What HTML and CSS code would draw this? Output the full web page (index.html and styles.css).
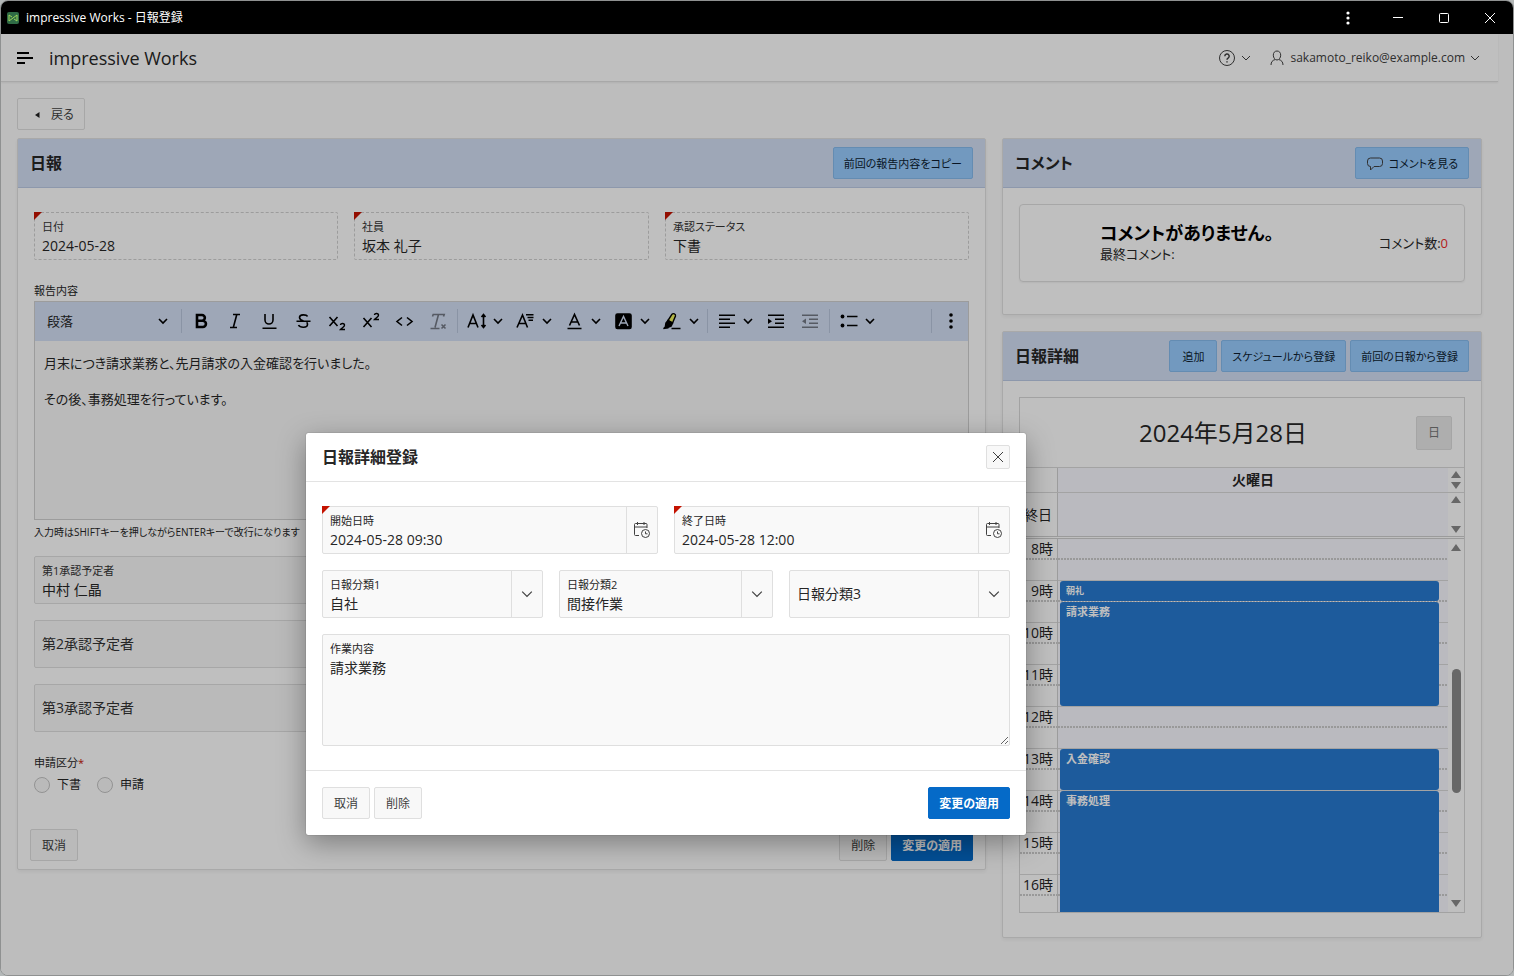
FILE: index.html
```html
<!DOCTYPE html>
<html lang="ja">
  <head>
    <meta charset="UTF-8" />
    <meta name="viewport" content="width=device-width, initial-scale=1.0" />
    <title>impressive Works - 日報登録</title>
    <link rel="stylesheet" href="styles.css">
  </head>
  <body>
    <svg class="defs" width="0" height="0" aria-hidden="true">
      <symbol id="chev" viewBox="0 0 10 10"><path d="M1 3l4 4 4-4" /></symbol>
      <symbol id="cal" viewBox="0 0 18 18"><path d="M6 14.500H2.500a1 1 0 0 1-1-1V3.500a1 1 0 0 1 1-1h10.500a1 1 0 0 1 1 1V7M1.500 6h12.500M4.500 1v3M11 1v3" /><circle cx="12.500" cy="12.500" r="4" /><path d="M12.500 10.500v2.300h2" /></symbol>
    </svg>

    <div class="window">
      <div class="titlebar">
        <svg class="app-icon" viewBox="0 0 12 12"><rect width="12" height="12" rx="2" fill="#2f6b45" /><path d="M2 3v6L10 3v6L7 7M2 3l3 2" fill="none" stroke="#9fd65a" /></svg>
        <span class="titlebar-text">impressive Works - 日報登録</span>
        <button class="win-btn win-menu" aria-label="メニュー"><svg viewBox="0 0 12 14" fill="#fff"><circle cx="6" cy="2" r="1.600" /><circle cx="6" cy="7" r="1.600" /><circle cx="6" cy="12" r="1.600" /></svg></button>
        <button class="win-btn" aria-label="最小化"><svg viewBox="0 0 12 14" stroke="#fff"><path d="M1 6.500h10" /></svg></button>
        <button class="win-btn" aria-label="最大化"><svg viewBox="0 0 12 14" fill="none" stroke="#fff"><rect x="1.500" y="2.500" width="9" height="9" rx="1" /></svg></button>
        <button class="win-btn" aria-label="閉じる"><svg viewBox="0 0 12 14" stroke="#fff"><path d="M1 2l10 10M11 2L1 12" /></svg></button>
      </div>

      <div class="page">
        <header class="app-header">
          <button class="icon-btn" aria-label="ナビゲーション"><svg width="16" height="14" viewBox="0 0 16 14" stroke="#000" stroke-width="2"><path d="M0 2h12M0 7h16M0 12h8" /></svg></button>
          <a class="app-name" href="#">impressive Works</a>
          <button class="nav-btn" aria-label="ヘルプ">
            <svg class="line" width="18" height="18" viewBox="0 0 18 18"><circle cx="9" cy="9" r="7.500" /><path d="M6.800 7.200a2.200 2.200 0 1 1 3.300 1.900c-.8.500-1.100.8-1.100 1.700" stroke-width="1.500" /><path d="M9 12.200v1.400" stroke-width="1.500" /></svg>
            <svg class="line" width="10" height="10"><use href="#chev" /></svg>
          </button>
          <button class="nav-btn">
            <svg class="line" width="16" height="18" viewBox="0 0 16 18"><path d="M8 2c2.300 0 3.700 1.700 3.700 4.200S10 11 8 11 4.300 8.700 4.300 6.200 5.700 2 8 2zM2 16c0-3 1.500-4.700 4-5.400M14 16c0-3-1.500-4.700-4-5.400" /></svg>
            <span>sakamoto_reiko@example.com</span>
            <svg class="line" width="10" height="10"><use href="#chev" /></svg>
          </button>
        </header>

        <main class="content">
          <button class="btn back"><svg width="6" height="8" viewBox="0 0 6 8"><path d="M5.500 1v6L1 4z" fill="#222" /></svg>戻る</button>

          <div class="columns">
            <section class="panel">
              <div class="panel-head">
                <h2>日報</h2>
                <button class="btn btn-light">前回の報告内容をコピー</button>
              </div>
              <form class="report">
                <div class="row row-info">
                  <div class="field readonly required"><label for="date">日付</label><input id="date" value="2024-05-28" readonly></div>
                  <div class="field readonly required"><label for="emp">社員</label><input id="emp" value="坂本 礼子" readonly></div>
                  <div class="field readonly required"><label for="status">承認ステータス</label><input id="status" value="下書" readonly></div>
                </div>

                <label class="small-label" for="body">報告内容</label>
                <div class="editor">
                  <div class="toolbar">
                    <button type="button" class="tool-heading">段落<svg class="bold" width="10" height="10"><use href="#chev" /></svg></button>
                    <span class="sep first"></span>
                    <button type="button" class="tool heavy" aria-label="太字"><svg viewBox="0 0 20 20"><path d="M6 4h5a2.800 2.800 0 0 1 0 5.700H6zM6 9.700h5.800a3.100 3.100 0 0 1 0 6.300H6z" /></svg></button>
                    <button type="button" class="tool" aria-label="斜体"><svg viewBox="0 0 20 20"><path d="M8 3.500h7M5 16.500h7M11.800 3.500L8.300 16.500" /></svg></button>
                    <button type="button" class="tool" aria-label="下線"><svg viewBox="0 0 20 20"><path d="M6 3v6a4 4 0 0 0 8 0V3M3.500 17.300h14" /></svg></button>
                    <button type="button" class="tool" aria-label="取り消し線"><svg viewBox="0 0 20 20"><path d="M14.500 5.500C13.500 3.500 6.500 2.800 6.500 6.500c0 1.800 1.500 2.700 4 3.500M5.500 14c1.500 3 9 3.300 9-.8 0-.8-.3-1.500-.8-2M3.500 10.200h14" /></svg></button>
                    <button type="button" class="tool" aria-label="下付き"><svg viewBox="0 0 20 20"><path d="M2.500 6l8 9M10.500 6l-8 9" /><path d="M13.500 14c0-2 4-2 4 .2 0 1.500-2.500 2.500-4 4.300h4.500" stroke-width="1.400" /></svg></button>
                    <button type="button" class="tool" aria-label="上付き"><svg viewBox="0 0 20 20"><path d="M2.500 7l8 9M10.500 7l-8 9" /><path d="M13.500 4c0-2 4-2 4 .2 0 1.500-2.500 2.500-4 4.300h4.500" stroke-width="1.400" /></svg></button>
                    <button type="button" class="tool" aria-label="コード"><svg viewBox="0 0 20 20"><path d="M7 6.500L2 10.500l5 4M12 6.500l5 4-5 4" /></svg></button>
                    <button type="button" class="tool dim" aria-label="書式を解除"><svg viewBox="0 0 20 20"><path d="M3.500 5.500l.7-2h11l-.7 2M9.500 3.500L6 16.500M1.500 17.500h9M12.500 13.500l4 4M16.500 13.500l-4 4" /></svg></button>
                    <span class="sep first"></span>
                    <button type="button" class="tool drop" aria-label="文字サイズ"><svg viewBox="0 0 20 20"><path d="M1 16.500L6 4l5 12.500M2.800 12.500h6.400M16.500 4v12M14.500 6L16.500 3.500 18.500 6M14.500 14l2 2.500 2-2.500" /></svg><svg class="bold" width="10" height="10"><use href="#chev" /></svg></button>
                    <button type="button" class="tool drop" aria-label="フォント"><svg viewBox="0 0 20 20"><path d="M1 16.500L6.500 4l5 12.500M3 12.500h7M10 3.700h7.500M11.500 6.500h6M12.500 9.200h4.500" /></svg><svg class="bold" width="10" height="10"><use href="#chev" /></svg></button>
                    <button type="button" class="tool drop" aria-label="文字色"><svg viewBox="0 0 20 20"><path d="M4.500 14.500L9.500 3.500l5 11M6.500 11H13M2.500 17.500h14" /></svg><svg class="bold" width="10" height="10"><use href="#chev" /></svg></button>
                    <button type="button" class="tool drop" aria-label="背景色"><svg viewBox="0 0 20 20"><rect x="2" y="3" width="15" height="14.500" rx="1.500" fill="#000" /><path d="M5 15L9.500 5.500 14 15M6.500 12h6" stroke="#d3dff5" stroke-width="1.400" /></svg><svg class="bold" width="10" height="10"><use href="#chev" /></svg></button>
                    <button type="button" class="tool drop" aria-label="蛍光ペン"><svg viewBox="0 0 20 20"><path d="M5 9.500L9 3.200c1.200-1.300 4-.2 3.500 1.800L9.500 12z" fill="#eef25c" stroke-width="1.400" /><path d="M5 9.500l4.500 2.500-1.500 3-4 1.500-1.500-1.200L3 12z" fill="#000" /><path d="M.5 17.500l2.500-2 1.500 1.300zM8.500 17.500h9" fill="#000" stroke-width="1.300" /></svg><svg class="bold" width="10" height="10"><use href="#chev" /></svg></button>
                    <span class="sep"></span>
                    <button type="button" class="tool drop" aria-label="配置"><svg viewBox="0 0 20 20"><path d="M2 4.200h16M2 8.200h11M2 12.200h16M2 16.200h11" /></svg><svg class="bold" width="10" height="10"><use href="#chev" /></svg></button>
                    <button type="button" class="tool" aria-label="インデント"><svg viewBox="0 0 20 20"><path d="M2 4.200h16M9 8.200h9M9 12.200h9M2 16.200h16" /><path d="M2 7.500v5.500L6 10.200z" fill="#000" stroke="none" /></svg></button>
                    <button type="button" class="tool dim" aria-label="インデント解除"><svg viewBox="0 0 20 20"><path d="M2 4.200h16M9 8.200h9M9 12.200h9M2 16.200h16" /><path d="M6 7.500v5.500L2 10.200z" fill="#000" stroke="none" /></svg></button>
                    <span class="sep"></span>
                    <button type="button" class="tool drop" aria-label="箇条書き"><svg viewBox="0 0 20 20"><circle cx="3.500" cy="5.500" r="1.900" fill="#000" stroke="none" /><circle cx="3.500" cy="14.500" r="1.900" fill="#000" stroke="none" /><path d="M8 5.500h10.500M8 14.500h10.500" /></svg><svg class="bold" width="10" height="10"><use href="#chev" /></svg></button>
                    <span class="sep push"></span>
                    <button type="button" class="tool" aria-label="その他"><svg viewBox="0 0 20 20"><g fill="#000" stroke="none"><circle cx="10" cy="4" r="1.800" /><circle cx="10" cy="10" r="1.800" /><circle cx="10" cy="16" r="1.800" /></g></svg></button>
                  </div>
                  <textarea id="body" class="editor-body">月末につき請求業務と、先月請求の入金確認を行いました。

その後、事務処理を行っています。</textarea>
                </div>
                <p class="help">入力時はSHIFTキーを押しながらENTERキーで改行になります</p>

                <div class="stack">
                  <div class="field picker"><label for="ap1">第1承認予定者</label><select id="ap1"><option>中村 仁晶</option></select><span class="arrow"><svg class="line" width="10" height="10"><use href="#chev" /></svg></span></div>
                  <div class="field picker empty"><label for="ap2">第2承認予定者</label><select id="ap2"><option></option></select><span class="arrow"><svg class="line" width="10" height="10"><use href="#chev" /></svg></span></div>
                  <div class="field picker empty"><label for="ap3">第3承認予定者</label><select id="ap3"><option></option></select><span class="arrow"><svg class="line" width="10" height="10"><use href="#chev" /></svg></span></div>
                </div>

                <fieldset class="radios">
                  <legend>申請区分<span class="star">*</span></legend>
                  <label><input type="radio" name="kind">下書</label>
                  <label><input type="radio" name="kind">申請</label>
                </fieldset>
              </form>
              <div class="panel-foot">
                <button class="btn">取消</button>
                <button class="btn push">削除</button>
                <button class="btn btn-primary">変更の適用</button>
              </div>
            </section>

            <div class="side">
              <section class="panel">
                <div class="panel-head">
                  <h2>コメント</h2>
                  <button class="btn btn-light"><svg class="line" width="18" height="16" viewBox="0 0 18 16"><path d="M5 2h8.500a3 3 0 0 1 3 3v2.500a3 3 0 0 1-3 3H8L4.500 14v-3.500a3 3 0 0 1-3-3V5a3 3 0 0 1 3-3z" /></svg>コメントを見る</button>
                </div>
                <div class="comment-body">
                  <div class="comment-card">
                    <div>
                      <h3>コメントがありません。</h3>
                      <p>最終コメント:</p>
                    </div>
                    <span class="comment-count">コメント数:<b>0</b></span>
                  </div>
                </div>
              </section>

              <section class="panel">
                <div class="panel-head">
                  <h2>日報詳細</h2>
                  <button class="btn btn-light">追加</button>
                  <button class="btn btn-light">スケジュールから登録</button>
                  <button class="btn btn-light">前回の日報から登録</button>
                </div>
                <div class="cal-body">
                  <div class="calendar">
                    <div class="cal-title">
                      <h3>2024年5月28日</h3>
                      <button class="day-btn" disabled>日</button>
                    </div>
                    <div class="cal-row cal-day">
                      <span></span><strong>火曜日</strong>
                      <div class="scroll"><i class="up"></i><i class="down"></i></div>
                    </div>
                    <div class="cal-row cal-allday">
                      <span>終日</span><div></div>
                      <div class="scroll"><i class="up"></i><i class="down"></i></div>
                    </div>
                    <div class="cal-grid">
                      <div class="hours">
                        <span>8時</span><span>9時</span><span>10時</span><span>11時</span><span>12時</span><span>13時</span><span>14時</span><span>15時</span><span>16時</span>
                      </div>
                      <div class="events">
                        <a href="#" class="event short" style="grid-row: 3 / span 1">朝礼</a>
                        <a href="#" class="event" style="grid-row: 4 / span 5">請求業務</a>
                        <a href="#" class="event" style="grid-row: 11 / span 2">入金確認</a>
                        <a href="#" class="event" style="grid-row: 13 / span 6">事務処理</a>
                      </div>
                      <div class="scroll tall"><i class="up"></i><b class="thumb"></b><i class="down"></i></div>
                    </div>
                  </div>
                </div>
              </section>
            </div>
          </div>
        </main>

        <div class="overlay"></div>
      </div>
    </div>

    <div class="dialog" role="dialog" aria-labelledby="dlg-title">
      <div class="dialog-head">
        <h2 id="dlg-title">日報詳細登録</h2>
        <button class="close" aria-label="閉じる"><svg class="line" width="12" height="12" viewBox="0 0 12 12"><path d="M1 1l10 10M11 1L1 11" /></svg></button>
      </div>
      <form class="dialog-body">
        <div class="row row-2">
          <div class="field picker required"><label for="start">開始日時</label><input id="start" value="2024-05-28 09:30"><button type="button" class="arrow" aria-label="開始日時を選択"><svg class="line" width="18" height="18"><use href="#cal" /></svg></button></div>
          <div class="field picker required"><label for="end">終了日時</label><input id="end" value="2024-05-28 12:00"><button type="button" class="arrow" aria-label="終了日時を選択"><svg class="line" width="18" height="18"><use href="#cal" /></svg></button></div>
        </div>
        <div class="row row-3">
          <div class="field picker"><label for="cat1">日報分類1</label><select id="cat1"><option>自社</option></select><span class="arrow"><svg class="line" width="12" height="12"><use href="#chev" /></svg></span></div>
          <div class="field picker"><label for="cat2">日報分類2</label><select id="cat2"><option>間接作業</option></select><span class="arrow"><svg class="line" width="12" height="12"><use href="#chev" /></svg></span></div>
          <div class="field picker empty"><label for="cat3">日報分類3</label><select id="cat3"><option></option></select><span class="arrow"><svg class="line" width="12" height="12"><use href="#chev" /></svg></span></div>
        </div>
        <div class="field area"><label for="work">作業内容</label><textarea id="work">請求業務</textarea></div>
      </form>
      <div class="dialog-foot">
        <button class="btn">取消</button>
        <button class="btn">削除</button>
        <button class="btn btn-primary push">変更の適用</button>
      </div>
    </div>
  </body>
</html>
```
FILE: styles.css
```css
* {
  box-sizing: border-box;
}

body {
  margin: 0;
  height: 100vh;
  overflow: hidden;
  background-color: #b4b8b8;
  color: #262626;
  font-family: "Open Sans", "Noto Sans CJK JP", sans-serif;
  font-size: 14px;
  line-height: 20px;
  font-feature-settings: "palt";
}

h2, h3, p {
  margin: 0;
}

button, input, select, textarea {
  font: inherit;
  font-feature-settings: inherit;
  color: inherit;
  margin: 0;
}

a {
  color: inherit;
  text-decoration: none;
}

.defs {
  position: absolute;
}

.line {
  fill: none;
  stroke: #404040;
  stroke-width: 1;
}

.bold {
  fill: none;
  stroke: #000;
  stroke-width: 1.6;
}

.push {
  margin-left: auto;
}

/* window frame */
.window {
  display: flex;
  flex-direction: column;
  height: 100vh;
  border: 1px solid #8f9191;
  border-radius: 8px;
  overflow: hidden;
}

.titlebar {
  display: flex;
  align-items: center;
  flex: none;
  height: 33px;
  padding-left: 6px;
  background-color: #000;
  color: #fff;
  font-size: 12px;
}

.app-icon {
  width: 12px;
  height: 12px;
  margin-right: 7px;
}

.titlebar-text {
  flex: 1;
}

.win-btn {
  display: flex;
  align-items: center;
  justify-content: center;
  width: 46px;
  height: 33px;
  padding: 0;
  border: none;
  background: none;
}

.win-btn svg {
  width: 12px;
  height: 14px;
}

.win-menu {
  margin-right: 4px;
}

.page {
  position: relative;
  flex: 1;
  background-color: #fdfdfd;
}

.overlay {
  position: absolute;
  inset: 0;
  background-color: rgba(0, 0, 0, 0.25);
}

/* header */
.app-header {
  display: flex;
  align-items: center;
  height: 48px;
  margin-right: 15px;
  padding: 0 18px 0 16px;
  background-color: #fff;
  border-bottom: 1px solid #e0e0e0;
  box-shadow: 0 1px 2px rgba(0, 0, 0, 0.08);
}

.icon-btn {
  display: flex;
  padding: 0;
  border: none;
  background: none;
}

.app-name {
  flex: 1;
  margin-left: 16px;
  font-size: 18px;
}

.nav-btn {
  display: flex;
  align-items: center;
  gap: 5px;
  margin-left: 18px;
  padding: 0;
  border: none;
  background: none;
  font-size: 12px;
  color: #404040;
}

/* buttons */
.btn {
  display: flex;
  align-items: center;
  justify-content: center;
  gap: 5px;
  min-width: 48px;
  height: 32px;
  padding: 1px 10px 0;
  border: 1px solid #dfdfdf;
  border-radius: 2px;
  background-color: #f8f8f8;
  color: #404040;
  font-size: 12px;
  white-space: nowrap;
}

.btn-light {
  padding: 1px 10px 0;
  border-color: #86bbee;
  background-color: #99ccff;
  color: #0c1c30;
  font-size: 11px;
}

.btn-primary {
  border-color: #056ac8;
  background-color: #056ac8;
  color: #fff;
  font-weight: bold;
}

.back {
  gap: 11px;
  padding: 1px 10px 0 16px;
  background-color: #fdfdfd;
  margin-bottom: 8px;
}

.content {
  padding: 16px 31px 0 16px;
}

.columns {
  display: grid;
  grid-template-columns: minmax(0, 969fr) minmax(0, 480fr);
  gap: 16px;
  align-items: start;
}

.side {
  display: grid;
  gap: 16px;
}

/* panels */
.panel {
  border: 1px solid #e2e2e2;
  border-radius: 2px;
  background-color: #fff;
  box-shadow: 0 2px 4px rgba(0, 0, 0, 0.06);
}

.panel-head {
  display: flex;
  align-items: center;
  gap: 4px;
  height: 49px;
  padding: 0 12px;
  background-color: #d3dff5;
  border-bottom: 1px solid #bccbe6;
}

.panel-head h2 {
  flex: 1;
  font-size: 16px;
  font-weight: 600;
}

.report {
  padding: 24px 16px 0;
}

.row {
  display: grid;
  gap: 16px;
}

.row-info {
  grid-template-columns: 304fr 295fr 304fr;
  margin-bottom: 20px;
}

.row-2 {
  grid-template-columns: 1fr 1fr;
}

.row-3 {
  grid-template-columns: 221fr 214fr 221fr;
}

/* fields with the label inside the box */
.field {
  position: relative;
  display: grid;
  grid-template-columns: minmax(0, 1fr);
  grid-template-rows: 22px 1fr;
  height: 48px;
  border: 1px solid #dfdfdf;
  border-radius: 2px;
  background-color: #f9f9f9;
}

.field label {
  grid-area: 1 / 1;
  z-index: 1;
  padding: 6px 0 0 7px;
  font-size: 11px;
  line-height: 16px;
  pointer-events: none;
}

.field input,
.field select,
.field textarea {
  grid-row: 1 / 3;
  grid-column: 1 / -1;
  width: 100%;
  padding: 19px 7px 0;
  border: none;
  background: none;
  appearance: none;
  outline: none;
}

.picker {
  grid-template-columns: minmax(0, 1fr) 31px;
}

.picker .arrow {
  grid-area: 1 / 2 / 3 / 3;
  display: flex;
  align-items: center;
  justify-content: center;
  padding: 0;
  border: none;
  border-left: 1px solid #dfdfdf;
  background: none;
}

.picker span.arrow {
  pointer-events: none;
}

.readonly {
  border: 1px dashed #d0d0d0;
  background: none;
}

.required::before {
  content: "";
  position: absolute;
  top: -1px;
  left: -1px;
  border-top: 8px solid #c41200;
  border-right: 8px solid transparent;
}

.empty label {
  grid-row: 1 / 3;
  padding-top: 13px;
  font-size: 14px;
  line-height: 20px;
}

.area {
  height: 112px;
}

.field textarea {
  height: 110px;
  padding-top: 23px;
  resize: vertical;
}

.small-label {
  display: block;
  height: 21px;
  font-size: 11px;
  line-height: 22px;
}

/* editor */
.editor {
  border: 1px solid #d0d0d0;
}

.toolbar {
  display: flex;
  align-items: center;
  height: 39px;
  padding-bottom: 2px;
  background-color: #d3dff5;
}

.tool-heading,
.tool {
  display: flex;
  align-items: center;
  flex: none;
  height: 36px;
  border: none;
  background: none;
}

.tool-heading {
  justify-content: space-between;
  width: 145px;
  padding: 0 12px;
  font-size: 13px;
}

.tool {
  justify-content: center;
  width: 34px;
  padding: 0;
}

.tool svg:first-child {
  width: 20px;
  height: 20px;
  fill: none;
  stroke: #000;
  stroke-width: 1.6;
}

.heavy svg:first-child {
  stroke-width: 2.6;
}

.drop {
  justify-content: flex-start;
  gap: 6px;
  width: 49px;
  padding-left: 7px;
}

.dim {
  opacity: 0.45;
}

.sep {
  width: 1px;
  height: 24px;
  margin: 0 2px;
  background-color: #b9c6dd;
}

.sep.first {
  margin-left: 1px;
}

.sep.push {
  margin-left: auto;
}

.editor-body {
  display: block;
  width: 100%;
  height: 178px;
  padding: 13px 9px;
  border: none;
  outline: none;
  resize: none;
  background-color: #f9f9f9;
  font-size: 13px;
  line-height: 18px;
}

.help {
  margin: 4px 0 16px;
  font-size: 10px;
  line-height: 16px;
}

.stack {
  display: grid;
  gap: 16px;
}

.radios {
  display: flex;
  gap: 16px;
  margin: 21px 0 0;
  padding: 0;
  border: none;
  font-size: 12px;
}

.radios legend {
  padding: 0;
  font-size: 11px;
  line-height: 20px;
}

.star {
  color: #c41200;
}

.radios label {
  display: flex;
  align-items: center;
  gap: 7px;
  height: 24px;
}

.radios input {
  appearance: none;
  width: 16px;
  height: 16px;
  border: 1px solid #c4c4c4;
  border-radius: 50%;
  background-color: #f9f9f9;
}

.panel-foot {
  display: flex;
  gap: 4px;
  padding: 32px 12px 8px;
}

/* comments */
.comment-body {
  padding: 16px 16px 32px;
}

.comment-card {
  display: flex;
  align-items: center;
  justify-content: space-between;
  height: 78px;
  padding: 0 16px 0 80px;
  border: 1px solid #dfdfdf;
  border-radius: 4px;
  box-shadow: 0 1px 2px rgba(0, 0, 0, 0.06);
  font-size: 13px;
}

.comment-card h3 {
  font-size: 18px;
  font-weight: 600;
  line-height: 22px;
  color: #000;
}

.comment-count b {
  font-weight: normal;
  color: #f02828;
}

/* calendar */
.cal-body {
  padding: 16px 16px 24px;
}

.calendar {
  border: 1px solid #d8d8d8;
}

.cal-title {
  display: flex;
  align-items: center;
  height: 69px;
  padding: 0 12px 0 10px;
}

.cal-title h3 {
  flex: 1;
  text-align: center;
  font-size: 24px;
  font-weight: normal;
}

.day-btn {
  width: 36px;
  height: 34px;
  border: 1px solid #dcdcdc;
  border-radius: 2px;
  background-color: #e8e8e8;
  color: #777;
  font-size: 12px;
}

.cal-row,
.cal-grid {
  display: grid;
  grid-template-columns: 37px 1fr 16px;
  border-top: 1px solid #dadada;
}

.cal-row > :nth-child(2),
.events {
  border-left: 1px solid #d0d0d0;
  background-color: #f9f8ff;
}

.cal-row > :nth-child(2) {
  text-align: center;
  font-weight: 600;
}

.cal-row span {
  align-self: center;
  padding-right: 5px;
  text-align: right;
}

.cal-day {
  height: 25px;
  line-height: 23px;
}

.cal-allday {
  height: 44px;
}

.cal-grid {
  grid-template-rows: 100%;
  height: 376px;
  border-top: 3px double #cfcfcf;
  overflow: hidden;
}

/* solid line on the hour, dotted line on the half hour */
.events {
  display: grid;
  grid-template-rows: repeat(18, 21px);
  padding: 0 9px 0 2px;
}

.hours,
.events {
  background-image:
    linear-gradient(to bottom, transparent 41px, #dadada 41px),
    radial-gradient(circle at 1px 20px, #cccccc 1px, transparent 1px);
  background-size: 100% 42px, 3px 42px;
}

.hours span {
  display: block;
  height: 42px;
  padding-right: 4px;
  text-align: right;
}

.event {
  margin-bottom: 1px;
  padding: 0 6px;
  border-radius: 3px;
  background-color: #277ad0;
  color: #fff;
  font-size: 11px;
  font-weight: 600;
  line-height: 20px;
}

.short {
  font-size: 9px;
}

.scroll {
  display: flex;
  flex-direction: column;
  align-items: center;
  justify-content: space-between;
  padding: 3px 0;
}

.up,
.down {
  border-left: 5px solid transparent;
  border-right: 5px solid transparent;
}

.up {
  border-bottom: 7px solid #8a8a8a;
}

.down {
  border-top: 7px solid #8a8a8a;
}

.tall {
  padding: 5px 0;
}

.thumb {
  width: 9px;
  height: 124px;
  margin: 118px 0 auto;
  border-radius: 5px;
  background-color: #8a8a8a;
}

/* dialog */
.dialog {
  position: absolute;
  top: 433px;
  left: 306px;
  width: 720px;
  border-radius: 2px;
  background-color: #fff;
  box-shadow: 0 0 1px rgba(0, 0, 0, 0.6), 0 8px 28px rgba(0, 0, 0, 0.35);
}

.dialog-head {
  display: flex;
  align-items: center;
  justify-content: space-between;
  height: 49px;
  padding: 0 16px;
  border-bottom: 1px solid #e3e3e3;
}

.dialog-head h2 {
  font-size: 16px;
  font-weight: 600;
}

.close {
  display: flex;
  align-items: center;
  justify-content: center;
  width: 24px;
  height: 24px;
  padding: 0;
  border: 1px solid #dfdfdf;
  border-radius: 2px;
  background-color: #f8f8f8;
}

.dialog-body {
  display: grid;
  gap: 16px;
  padding: 24px 16px;
}

.dialog-foot {
  display: flex;
  gap: 4px;
  padding: 16px;
  border-top: 1px solid #e3e3e3;
}
```
